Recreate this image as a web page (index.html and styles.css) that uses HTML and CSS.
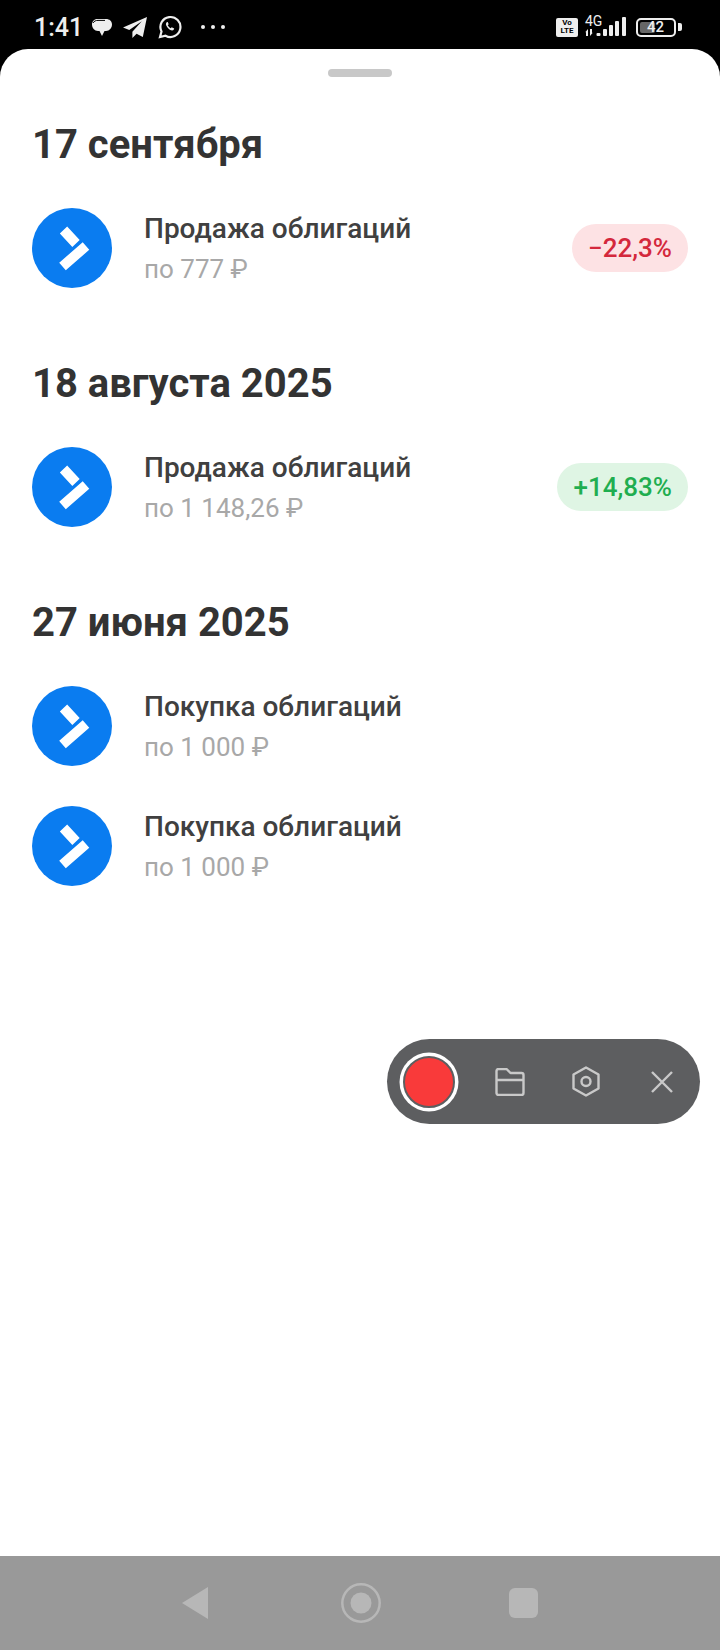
FILE: index.html
```html
<!DOCTYPE html>
<html lang="en">
<head>
    <meta charset="UTF-8" />
    <meta name="viewport" content="width=device-width, initial-scale=1.0" />
    <title>Операции</title>
    <link rel="stylesheet" href="styles.css">
</head>
<body>
<svg class="defs" width="0" height="0">
    <symbol id="logo" viewBox="0 0 80 80">
        <circle cx="40" cy="40" r="40" fill="#0a7cf0"/>
        <path d="M31.500 22 44 35.500M30.500 58.500 54 38" stroke="#fff" stroke-width="10" fill="none"/>
    </symbol>
</svg>
<div class="phone">
    <div class="status-bar">
        <div class="status-left">
            <span class="clock">1:41</span>
            <svg class="bubble" width="20" height="19" viewBox="0 0 20 19"><path d="M6 1h8c3.500 0 6 2.200 6 5.500S17.500 13 14 13h-1.500L10 18l-2.500-5H6c-3.500 0-6-3-6-6.500S2.500 1 6 1z" fill="#eee"/><path d="M1 5c1-2 3-2.600 5-2.600h7" stroke="#000" stroke-width="1" fill="none"/></svg>
            <svg class="telegram" width="24" height="21" viewBox="0 0 23 20"><path d="M23 0 0 10l6 2.500L18 4 9 14v6l4-4 6 3z" fill="#eee"/></svg>
            <svg class="whatsapp" width="24" height="24" viewBox="0 0 24 24"><path d="M2 22l1.500-5.500A10 10 0 1 1 7.500 20.700z" fill="none" stroke="#eee" stroke-width="2.200"/><path d="M9 7c-1.500 1-1.500 3 .5 5.500s4.500 3.500 6 2.500l.7-1.500-2.500-1.300-1 1c-1-.4-2.500-2-3-3l1-1L9.700 7z" fill="#eee"/></svg>
            <span class="dots"><i></i><i></i><i></i></span>
        </div>
        <div class="status-right">
            <span class="volte">Vo<br>LTE</span>
            <span class="signal">
                <span class="net">4G</span>
                <svg width="42" height="24" viewBox="0 0 42 24"><g fill="#eee"><path d="M3 14v7H1v-4l-1 .5zM5 21v-7h2v4l1-.5z"/><rect x="11.500" y="18" width="4" height="3" rx="1"/><rect x="18" y="14" width="4" height="7" rx="1"/><rect x="24" y="10" width="4" height="11" rx="1"/><rect x="30" y="6" width="4" height="15" rx="1"/><rect x="37" y="2" width="4" height="19" rx="1"/></g></svg>
            </span>
            <span class="battery"><span class="level"></span><span class="pct">42</span></span>
            <span class="battery-tip"></span>
        </div>
    </div>

    <div class="sheet">
        <div class="handle"></div>

        <section class="group">
            <h2>17 сентября</h2>
            <div class="row">
                <svg class="logo" width="80" height="80"><use href="#logo"/></svg>
                <div class="info">
                    <div class="title">Продажа облигаций</div>
                    <div class="sub">по 777 ₽</div>
                </div>
                <span class="badge badge-red">−22,3%</span>
            </div>
        </section>

        <section class="group">
            <h2>18 августа 2025</h2>
            <div class="row">
                <svg class="logo" width="80" height="80"><use href="#logo"/></svg>
                <div class="info">
                    <div class="title">Продажа облигаций</div>
                    <div class="sub">по 1 148,26 ₽</div>
                </div>
                <span class="badge badge-green">+14,83%</span>
            </div>
        </section>

        <section class="group">
            <h2>27 июня 2025</h2>
            <div class="row">
                <svg class="logo" width="80" height="80"><use href="#logo"/></svg>
                <div class="info">
                    <div class="title">Покупка облигаций</div>
                    <div class="sub">по 1 000 ₽</div>
                </div>
            </div>
            <div class="row">
                <svg class="logo" width="80" height="80"><use href="#logo"/></svg>
                <div class="info">
                    <div class="title">Покупка облигаций</div>
                    <div class="sub">по 1 000 ₽</div>
                </div>
            </div>
        </section>

        <!-- floating recorder -->
        <div class="recorder">
            <span class="rec-btn"></span>
            <svg class="rec-folder" width="30" height="28" viewBox="0 0 30 28" fill="none" stroke="#c9c9c9" stroke-width="2.400" stroke-linejoin="round"><path d="M1.500 25V3a2 2 0 0 1 2-2h8l4 4h11a2 2 0 0 1 2 2v18a2 2 0 0 1-2 2h-23a2 2 0 0 1-2-2zM1.500 12h27"/></svg>
            <svg class="rec-gear" width="28" height="31" viewBox="0 0 28 31" fill="none" stroke="#c9c9c9" stroke-width="2.400" stroke-linejoin="round"><path d="M14 1.500 26.500 8.500v14L14 29.500 1.500 22.500v-14z"/><circle cx="14" cy="15.500" r="4.500"/></svg>
            <svg class="rec-close" width="22" height="22" viewBox="0 0 22 22" fill="none" stroke="#c9c9c9" stroke-width="2.400"><path d="M1 1 21 21M21 1 1 21"/></svg>
        </div>
    </div>

    <div class="nav-bar">
        <svg width="26" height="32" viewBox="0 0 26 32"><path d="M26 0v32L0 16z" fill="#b7b7b7"/></svg>
        <svg class="nav-home" width="40" height="40" viewBox="0 0 40 40"><circle cx="20" cy="20" r="18.700" fill="none" stroke="#b7b7b7" stroke-width="2.500"/><circle cx="20" cy="20" r="10.500" fill="#b7b7b7"/></svg>
        <span class="nav-square"></span>
    </div>
</div>
</body>
</html>
```

FILE: styles.css
```css
* {
    box-sizing: border-box;
}

body {
    margin: 0;
    background: #000;
    font-family: Roboto, "Liberation Sans", sans-serif;
}

.defs {
    display: block;
    height: 0;
}

.phone {
    width: 720px;
    height: 1650px;
    display: flex;
    flex-direction: column;
    overflow: hidden;
}

/* Status bar */
.status-bar {
    height: 49px;
    padding: 5px 38px 0 34px;
    display: flex;
    justify-content: space-between;
    align-items: center;
    background: #000;
    color: #eee;
}

.status-left {
    display: flex;
    align-items: center;
}

.clock {
    font-size: 25px;
    font-weight: 500;
}

.bubble {
    margin-left: 9px;
}

.telegram {
    margin-left: 11px;
}

.whatsapp {
    margin-left: 11px;
}

.dots {
    display: flex;
    gap: 6px;
    margin-left: 19px;
}

.dots i {
    width: 4px;
    height: 4px;
    border-radius: 50%;
    background: #eee;
}

.status-right {
    display: flex;
    align-items: center;
}

.volte {
    width: 22px;
    height: 19px;
    padding-top: 1px;
    border-radius: 2px;
    background: #eee;
    color: #000;
    font-size: 8px;
    font-weight: 700;
    line-height: 8px;
    text-align: center;
}

.signal {
    position: relative;
    width: 42px;
    height: 24px;
    margin-left: 7px;
}

.signal svg {
    display: block;
}

.net {
    position: absolute;
    left: 0;
    top: -2px;
    font-size: 14px;
    line-height: 16px;
}

.battery {
    position: relative;
    width: 40px;
    height: 19px;
    margin-left: 9px;
    padding: 2px;
    border: 2px solid #eee;
    border-radius: 5px;
}

.level {
    display: block;
    width: 15px;
    height: 100%;
    border-radius: 2px;
    background: #666;
}

.pct {
    position: absolute;
    left: 9px;
    top: -1px;
    font-size: 15px;
    font-weight: 500;
    line-height: 17px;
}

.battery-tip {
    width: 4px;
    height: 8px;
    margin-left: 2px;
    border-radius: 0 2px 2px 0;
    background: #eee;
}

/* Sheet */
.sheet {
    position: relative;
    height: 1507px;
    padding: 20px 32px 0;
    border-radius: 28px 28px 0 0;
    background: #fff;
}

.handle {
    width: 64px;
    height: 8px;
    margin: 0 auto 46px;
    border-radius: 4px;
    background: #c8c8c8;
}

.group {
    margin-bottom: 74px;
}

h2 {
    margin: 0;
    color: #333;
    font-size: 40px;
    font-weight: 700;
    line-height: 44px;
}

.row {
    display: flex;
    align-items: center;
    margin-top: 40px;
}

.group h2 + .row {
    margin-top: 41px;
}

.logo {
    flex: none;
    display: block;
}

.info {
    flex: 1;
    margin-left: 32px;
    padding-top: 1px;
}

.title {
    color: #404040;
    font-size: 28px;
    font-weight: 500;
    line-height: 36px;
}

.sub {
    margin-top: 4px;
    color: #a8a8a8;
    font-size: 26px;
    line-height: 36px;
}

.badge {
    height: 48px;
    padding: 0 16px;
    border-radius: 24px;
    font-size: 26px;
    font-weight: 500;
    line-height: 48px;
}

.badge-red {
    background: #fde2e4;
    color: #d4283c;
}

.badge-green {
    background: #dff5e4;
    color: #1fae50;
}

/* Screen recorder */
.recorder {
    position: absolute;
    left: 387px;
    top: 990px;
    width: 313px;
    height: 85px;
    padding-left: 16px;
    display: flex;
    align-items: center;
    border-radius: 43px;
    background: #5d5e60;
}

.rec-btn {
    width: 52px;
    height: 52px;
    border: 2px solid #5d5e60;
    border-radius: 50%;
    background: #f93a3a;
    box-shadow: 0 0 0 3.5px #fff;
}

.rec-folder {
    margin-left: 40px;
}

.rec-gear {
    margin-left: 47px;
}

.rec-close {
    margin-left: 51px;
}

/* Navigation bar */
.nav-bar {
    height: 94px;
    padding: 0 182px;
    display: flex;
    justify-content: space-between;
    align-items: center;
    background: #999;
}

.nav-home {
    margin-left: 4px;
}

.nav-square {
    width: 29px;
    height: 30px;
    border-radius: 6px;
    background: #b7b7b7;
}
```
